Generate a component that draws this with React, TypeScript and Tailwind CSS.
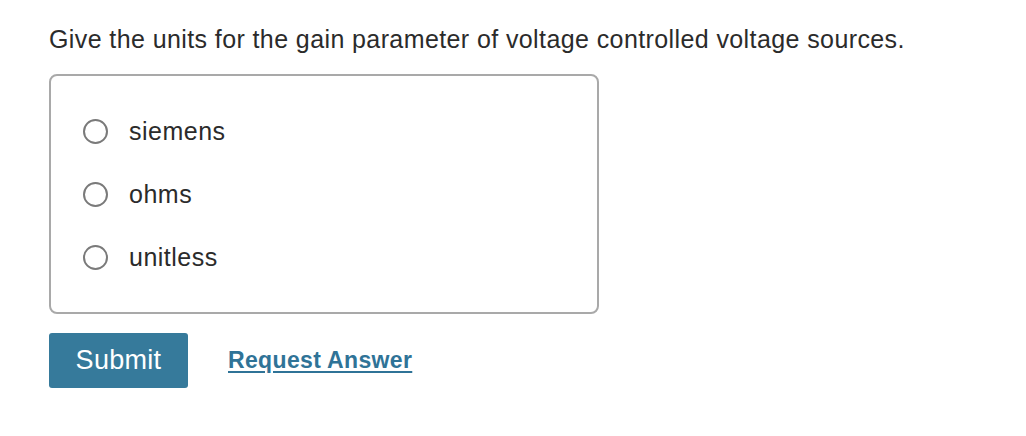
const options = ['siemens', 'ohms', 'unitless'];

export default function App() {
  return (
    <div className="min-h-[436px] w-full bg-white pl-[49px] pt-[23px] font-['Liberation_Sans',Arial,sans-serif] text-[#2b2b2b]">
      <p className="text-[25px] leading-[33px] tracking-[0.4px]">
        Give the units for the gain parameter of voltage controlled voltage sources.
      </p>

      <div className="mt-[18px] flex h-[240px] w-[550px] flex-col gap-[39px] rounded-[8px] border-2 border-[#a9a9a9] pt-[43px]">
        {options.map((opt) => (
          <label key={opt} className="flex h-[24px] items-center pl-[32px]">
            <span className="h-[25px] w-[25px] shrink-0 rounded-full border-2 border-[#7a7a7a] bg-white" />
            <span className="ml-[21px] text-[25px] leading-none tracking-[0.5px]">{opt}</span>
          </label>
        ))}
      </div>

      <div className="mt-[19px] flex items-center">
        <button className="h-[55px] w-[139px] rounded-[3px] bg-[#367a9b] text-[27px] tracking-[0.3px] text-white">
          Submit
        </button>
        <a href="#" className="ml-[40px] text-[23px] font-bold tracking-[0.35px] text-[#2f7397] underline underline-offset-[3px]">
          Request Answer
        </a>
      </div>
    </div>
  );
}
